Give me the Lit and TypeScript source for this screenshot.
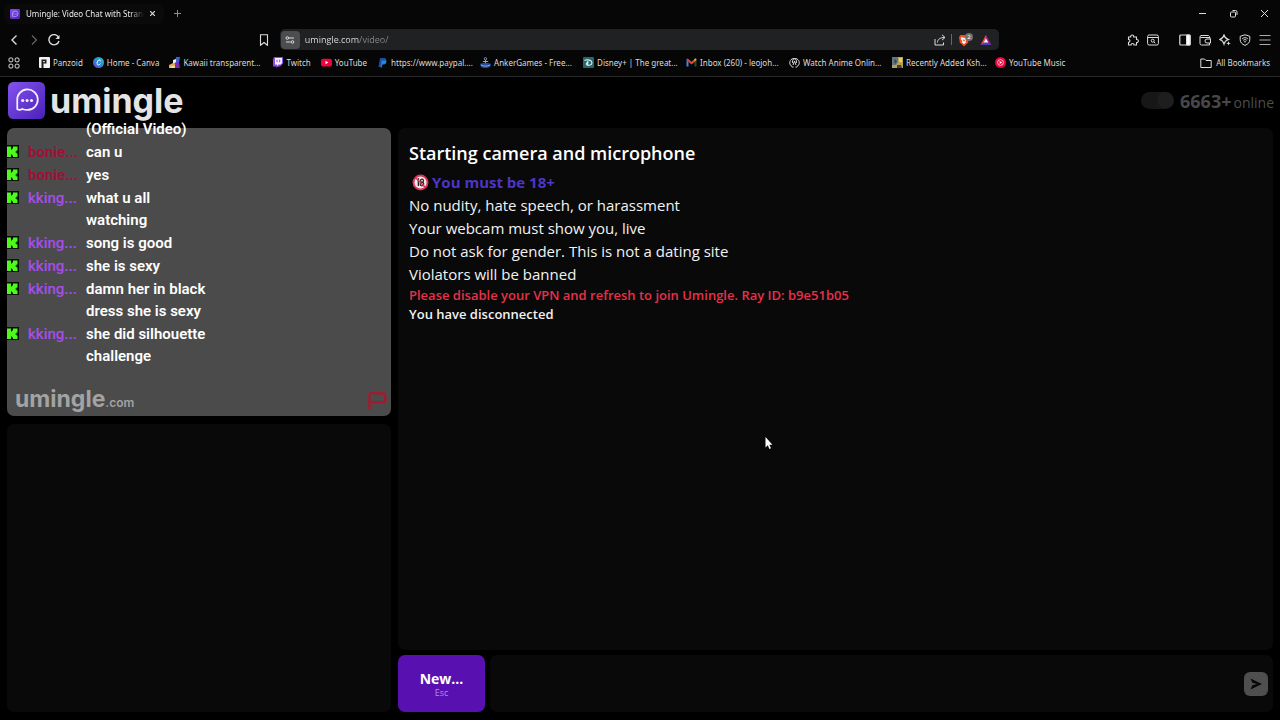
import { LitElement, html, css, svg, nothing } from "lit";
import { customElement, property } from "lit/decorators.js";
import { classMap } from "lit/directives/class-map.js";

const logoMark = svg`
  <defs><linearGradient id="lg" x1="0" y1="0" x2="1" y2="1"><stop offset="0" stop-color="#8354ee"/><stop offset="1" stop-color="#4a1fb8"/></linearGradient></defs>
  <rect width="36" height="36" rx="5" fill="url(#lg)"/>
  <path d="M9 26.500V18a10 10 0 1 1 10 9.200c-2 0-3.500-.3-5-1-1.500.9-3.200 1.100-5 .3z" fill="none" stroke="#f3eefe" stroke-width="1.700" stroke-linejoin="round"/>
  <g fill="#f3eefe"><circle cx="14.300" cy="18" r="1.500"/><circle cx="18.600" cy="18" r="1.500"/><circle cx="22.900" cy="18" r="1.500"/></g>`;

const favicons: Record<string, unknown> = {
  panzoid: svg`<rect width="11" height="11" rx="1" fill="#f2f2f2"/><path d="M2.500 11V2.500h5v4h-3V11z" fill="#1c1c1c"/><path d="M4.200 4h1.600v1.200H4.200z" fill="#f2f2f2"/>`,
  canva: svg`<defs><linearGradient id="cv" x1="0" y1="1" x2="1" y2="0"><stop offset="0" stop-color="#6a35d9"/><stop offset=".5" stop-color="#2d8fd8"/><stop offset="1" stop-color="#25c3cf"/></linearGradient></defs><circle cx="5.500" cy="5.500" r="5.500" fill="url(#cv)"/><path d="M7.500 4.200C7.400 2.900 6.200 2.600 5.300 3.400 3.900 4.600 3.500 8 5.200 8c.9 0 1.700-.6 2.200-1.400" fill="none" stroke="#fff" stroke-width="1"/>`,
  kawaii: svg`<path d="M7 0h4l-1 6-4 1z" fill="#3d5fd0"/><path d="M4 3l3-1v3L4 8z" fill="#eee"/><path d="M0 8l4-2 3 1v4H0z" fill="#e6a56c"/><path d="M6 6l4-1 1 6H6z" fill="#7a2bb3"/><path d="M2 9h4v2H1z" fill="#f3dc7a"/>`,
  twitch: svg`<path d="M2 0h9v6.500L8 9.500H6L4.500 11V9.500H1V2z" fill="#8c46f5"/><path d="M3 1h7v5L8.500 7.500H6.500L5 9V7.500H3z" fill="#f6f0ff"/><path d="M5 2.700v2.600M7.700 2.700v2.600" stroke="#8c46f5" stroke-width="1"/>`,
  youtube: svg`<rect y="1.700" width="11" height="7.800" rx="2" fill="#f4003d"/><path d="M4.500 3.800v3.500L7.300 5.600z" fill="#fff"/>`,
  paypal: svg`<path d="M3 1h4c2 0 2.700 1.200 2.300 2.800C8.900 5.800 7.500 6.500 5.500 6.500H4.700L4 10H1.500z" fill="#1c4ba8"/><path d="M4.700 3.500h4.500c.8 2.700-.7 4-3 4h-.8L4.800 10.500H3.500z" fill="#2b93e0" opacity=".85"/>`,
  anker: svg`<circle cx="5.500" cy="1.800" r="1.200" fill="none" stroke="#7da7e8" stroke-width=".9"/><path d="M5.500 3v4M2.800 4.500h5.400" stroke="#7da7e8" stroke-width="1.100"/><path d="M0 7c3-1.200 8-1.200 11 0l-1 3c-2.500 1.200-6.500 1.200-9 0z" fill="#274f9c"/><path d="M1 8c3 1.500 6 1.500 9 0" fill="none" stroke="#8fb4ee" stroke-width=".9"/>`,
  disney: svg`<rect width="11" height="11" rx="1" fill="#27666d"/><path d="M1.500 3.500c3-1.500 7.500-.3 7.500 2.300 0 2.400-3.500 3-5 2.200-1.500-1-.5-2.400 1.500-2.500M4.700 3.800v4.500" fill="none" stroke="#d9f2f1" stroke-width="1.100"/>`,
  gmail: svg`<path d="M.5 9.500V3l2 1.500v5z" fill="#4284f3"/><path d="M.5 3V2l1.300-.5L5.500 4.700 9 1.700v3L5.500 7.600z" fill="#e34335"/><path d="M8.500 9.500v-5l2-1.700v6.700z" fill="#2fa650" opacity=".5"/><path d="M8.500 4.500V2c1-.9 2-.4 2 .9z" fill="#f9ba06"/>`,
  anime: svg`<path d="M3 9.500C0 8 0 3.500 3 2c3-1.500 5 1 4.500 4M8 9.500c3-1.500 3-6 0-7.500-3-1.500-5 1-4.500 4" fill="none" stroke="#ddd" stroke-width="1"/><path d="M4 8l1.500-4L7 8M3 10h1.500M6.500 10H8" fill="none" stroke="#ddd" stroke-width="1"/>`,
  kshow: svg`<rect width="11" height="11" fill="#b9a24e"/><path d="M0 0h6v5L4 8H0z" fill="#5f7684"/><path d="M2 2l3 2-2 3M5 8h4l1 3H5z" fill="#37424a"/><path d="M7 1h3v4H7z" fill="#e5cf6a"/>`,
  ytmusic: svg`<circle cx="5.500" cy="5.500" r="5.500" fill="#f4003d"/><circle cx="5.500" cy="5.500" r="2.900" fill="none" stroke="#fff" stroke-width=".7"/><path d="M4.700 4v3l2.400-1.500z" fill="#fff"/>`,
};

const bookmarks = [
  { icon: "panzoid", label: "Panzoid" },
  { icon: "canva", label: "Home - Canva" },
  { icon: "kawaii", label: "Kawaii transparent...", clipped: true },
  { icon: "twitch", label: "Twitch" },
  { icon: "youtube", label: "YouTube" },
  { icon: "paypal", label: "https://www.paypal....", clipped: true },
  { icon: "anker", label: "AnkerGames - Free...", clipped: true },
  { icon: "disney", label: "Disney+ | The great...", clipped: true },
  { icon: "gmail", label: "Inbox (260) - leojoh...", clipped: true },
  { icon: "anime", label: "Watch Anime Onlin...", clipped: true },
  { icon: "kshow", label: "Recently Added Ksh...", clipped: true },
  { icon: "ytmusic", label: "YouTube Music" },
];

@customElement("browser-bar")
class BrowserBar extends LitElement {
  static styles = css`
    :host { display: block; background: #060606; border-bottom: 1px solid #2a2a2a; color: #dcdcdc; font-family: "Noto Sans", "Open Sans", sans-serif; font-size: 8px; }
    button, a { border: 0; background: none; padding: 0; color: inherit; font: inherit; text-decoration: none; display: flex; align-items: center; }
    svg { display: block; flex: none; fill: none; stroke: currentColor; }
    .fav svg, svg.fav { stroke: none; }
    .strip { display: flex; align-items: center; height: 27px; padding: 0 10px 0 4px; }
    .tab { display: flex; align-items: center; width: 160px; height: 20px; padding: 0 9px 0 6px; box-sizing: border-box; background: #0a0a0a; border-radius: 5px; }
    .title { flex: 1; margin: 0 6px; white-space: nowrap; overflow: hidden; color: #eaeaea; -webkit-mask-image: linear-gradient(to right, #000 88%, transparent); mask-image: linear-gradient(to right, #000 88%, transparent); }
    .plus { margin-left: 8px; color: #8e8e8e; }
    .window { display: flex; margin-left: auto; gap: 20px; }
    .tools { display: flex; align-items: center; height: 25px; padding: 0 9px 0 8px; }
    .nav { display: flex; gap: 8px; flex: 1; }
    .dim { color: #666; }
    .mark { margin-right: 10px; }
    .address { display: flex; align-items: center; flex: 0 0 56.2vw; height: 21px; background: #202123; border-radius: 5px; padding-right: 7px; box-sizing: border-box; }
    .site { width: 19px; height: 18px; margin: 0 0 0 1px; justify-content: center; background: #4b4d4f; border-radius: 4px; }
    .url { flex: 1; min-width: 0; margin: 0 0 0 5px; padding: 0; border: 0; outline: 0; font: 9px "Open Sans", sans-serif; color: transparent; background: linear-gradient(to right, #e6e6e6 54px, #8b8b8b 54px); -webkit-background-clip: text; background-clip: text; }
    .bar { width: 1px; height: 11px; margin: 0 6px 0 5px; background: #66686a; }
    .brave { margin-right: 6px; }
    .right { display: flex; align-items: center; justify-content: flex-end; gap: 8px; flex: 1; padding-left: 22px; }
    .gap { margin-right: 12px; }
    .marks { display: flex; align-items: center; height: 24px; box-sizing: border-box; padding: 0 10px 3px 8px; white-space: nowrap; }
    .list { display: flex; gap: 10px; margin-left: 19px; }
    .list a { gap: 3px; }
    .list .clipped { width: 93px; }
    .all { margin-left: auto; gap: 4px; }
  `;

  render() {
    return html`
      <div class="strip">
        <div class="tab">
          <svg class="fav" width="10" height="10" viewBox="0 0 36 36">${logoMark}</svg>
          <span class="title">Umingle: Video Chat with Strangers</span>
          <button aria-label="Close tab"><svg width="5" height="5" viewBox="0 0 5 5"><path d="M0 0l5 5M5 0L0 5" stroke-width="1.200"/></svg></button>
        </div>
        <button class="plus" aria-label="New tab"><svg width="11" height="11" viewBox="0 0 11 11"><path d="M5.500 2v7M2 5.500h7"/></svg></button>
        <div class="window">
          <button aria-label="Minimize"><svg width="11" height="11" viewBox="0 0 11 11"><path d="M2 5.500h7"/></svg></button>
          <button aria-label="Restore"><svg width="11" height="11" viewBox="0 0 11 11"><rect x="2.500" y="4" width="5" height="5" rx="1"/><path d="M4.500 2.500h3a1.500 1.500 0 0 1 1.500 1.500v3"/></svg></button>
          <button aria-label="Close window"><svg width="11" height="11" viewBox="0 0 11 11"><path d="M2 2l7 7M9 2L2 9"/></svg></button>
        </div>
      </div>
      <div class="tools">
        <div class="nav">
          <button aria-label="Back"><svg width="12" height="12" viewBox="0 0 12 12"><path d="M8.500 1.500L4 6l4.500 4.500" stroke-width="1.400"/></svg></button>
          <button class="dim" aria-label="Forward"><svg width="12" height="12" viewBox="0 0 12 12"><path d="M4 1.500L8.500 6 4 10.500" stroke-width="1.200"/></svg></button>
          <button aria-label="Reload"><svg width="12" height="12" viewBox="0 0 12 12"><path d="M10.500 3.200A5.100 5.100 0 1 0 11 7" stroke-width="1.400"/><path d="M11.500 1v4h-4z" fill="currentColor" stroke="none"/></svg></button>
        </div>
        <button class="mark" aria-label="Bookmark this page"><svg width="12" height="12" viewBox="0 0 12 12"><path d="M2.500.8h7v10.500L6 8.500l-3.500 2.800z" stroke-width="1.100"/></svg></button>
        <div class="address">
          <button class="site" aria-label="Site information"><svg width="10" height="10" viewBox="0 0 10 10"><circle cx="2.300" cy="3" r="1.300"/><path d="M4 3h5M1 7h4.500"/><circle cx="7.500" cy="7" r="1.300"/></svg></button>
          <input class="url" type="text" aria-label="Address" value="umingle.com/video/" />
          <button aria-label="Share"><svg width="12" height="12" viewBox="0 0 12 12" stroke="#999"><path d="M1 5v6h8.500V8.500M3.500 8.500C3.500 5.500 6 3.500 10.500 3.500M8 .8l3 2.700-3 2.700"/></svg></button>
          <span class="bar"></span>
          <button class="brave" aria-label="Brave Shields"><svg class="fav" width="16" height="14" viewBox="0 0 16 14"><path d="M2.500 2h7l1.500 2-.8 5.500-4.200 4-4.200-4L1 4z" fill="#ee5125"/><path d="M3.500 4L6 5l2.500-1 .7 2L7.500 8l.5 1.500-2 1.500-2-1.500L4.500 8 2.800 6z" fill="#fff"/><path d="M4.500 6L6 7l1.500-1L6 9z" fill="#ee5125"/><circle cx="11" cy="4" r="4" fill="#6d7075"/><text x="11" y="6" font-size="6" text-anchor="middle" fill="#fff">2</text></svg></button>
          <button aria-label="Brave Rewards"><svg class="fav" width="12" height="12" viewBox="0 0 12 12"><path d="M6 .8L.5 11l5.500-3z" fill="#f24a3c"/><path d="M6 .8L11.500 11 6 8z" fill="#9b2085"/><path d="M.5 11h11L6 7.500z" fill="#4a3fb5"/><path d="M6 4.500l2.300 4H3.700z" fill="#fff"/></svg></button>
        </div>
        <div class="right">
          <button aria-label="Extensions"><svg width="12" height="12" viewBox="0 0 12 12"><path d="M1.500 3h2.200C3.300.3 7 .3 6.700 3H9.500v2.500c2.500-.3 2.500 3.300 0 3V11H7C7 9 4 9 4 11H1.500V8.300C3.500 8 3.500 5.500 1.500 5.500z" stroke-width="1.100"/></svg></button>
          <button class="gap" aria-label="Search tabs"><svg width="12" height="12" viewBox="0 0 12 12"><rect x=".6" y="1" width="10.800" height="10" rx="1.500"/><path d="M1 3.500h10M6.800 7.800L8.300 9.300"/><circle cx="5.700" cy="6.700" r="1.500"/></svg></button>
          <button aria-label="Side panel"><svg width="12" height="12" viewBox="0 0 12 12"><rect x=".8" y="1" width="10.400" height="10" rx="1" stroke-width="1.200"/><path d="M7.500 1H11v10H7.500z" fill="#fff"/></svg></button>
          <button aria-label="Wallet"><svg width="12" height="12" viewBox="0 0 12 12"><path d="M10.500 4V2.500L9.500 1.500H2A1.500 1.500 0 0 0 1 3v6.500a1.500 1.500 0 0 0 1.500 1.500h8v-2M1.500 3.500h9.500V5M11.500 5H8a2 2 0 0 0 0 4h3.500z"/></svg></button>
          <button aria-label="Leo AI"><svg width="12" height="12" viewBox="0 0 12 12"><path d="M5 1c.7 2.700 1.500 3.600 4.500 4.500C6.500 6.400 5.700 7.300 5 10 4.300 7.300 3.500 6.400.7 5.500 3.500 4.600 4.300 3.700 5 1z" stroke-width="1.100"/><path d="M9.500 7l.6 1.700 1.700.6-1.700.6-.6 1.700-.6-1.700-1.700-.6 1.700-.6z" fill="currentColor" stroke="none"/></svg></button>
          <button aria-label="VPN"><svg width="12" height="12" viewBox="0 0 12 12"><path d="M6 .8l4.800 1.500v3.500c0 2.500-1.800 4.400-4.800 5.600-3-1.200-4.800-3.100-4.800-5.600V2.300z"/><path d="M3.200 4.800c1.700-1.500 3.900-1.500 5.600 0M4.300 6.300c1-.9 2.400-.9 3.400 0" /><circle cx="6" cy="7.800" r=".8" fill="currentColor" stroke="none"/></svg></button>
          <button aria-label="Menu"><svg width="12" height="12" viewBox="0 0 12 12"><path d="M.5 1.500h11M.5 6h11M.5 10.500h11" stroke="#aaa"/></svg></button>
        </div>
      </div>
      <nav class="marks">
        <button aria-label="Apps"><svg width="12" height="12" viewBox="0 0 12 12"><rect x="1" y="1" width="3.800" height="3.800" rx="1"/><rect x="7.200" y="1" width="3.800" height="3.800" rx="1"/><rect x="1" y="7.200" width="3.800" height="3.800" rx="1"/><rect x="7.200" y="7.200" width="3.800" height="3.800" rx="1"/></svg></button>
        <div class="list">
          ${bookmarks.map(b => html`<a href="#" class=${classMap({ clipped: !!b.clipped })}><svg class="fav" width="11" height="11" viewBox="0 0 11 11">${favicons[b.icon]}</svg>${b.label}</a>`)}
        </div>
        <button class="all"><svg width="12" height="12" viewBox="0 0 12 12"><path d="M.8 2h3.700L6 3.500h5.200V10.500H.8z"/></svg>All Bookmarks</button>
      </nav>`;
  }
}

const messages = [
  { text: "(Official Video)" },
  { user: "bonie...", tone: "red", text: "can u" },
  { user: "bonie...", tone: "red", text: "yes" },
  { user: "kking...", tone: "purple", text: "what u all watching" },
  { user: "kking...", tone: "purple", text: "song is good" },
  { user: "kking...", tone: "purple", text: "she is sexy" },
  { user: "kking...", tone: "purple", text: "damn her in black dress she is sexy" },
  { user: "kking...", tone: "purple", text: "she did silhouette challenge" },
];

@customElement("stream-chat")
class StreamChat extends LitElement {
  static styles = css`
    :host { display: block; font: 15px/22px Roboto, sans-serif; }
    ul { list-style: none; margin: 0; padding: 0; display: flex; flex-direction: column; gap: 1px; }
    li { display: grid; grid-template-columns: 21px 58px 128px; }
    svg { display: block; margin-top: 4px; }
    .user { font-weight: 500; }
    .red { color: #a30e38; font-weight: 600; }
    .purple { color: #a64df0; }
    .text { grid-column: 3; color: #fff; font-weight: 600; }
  `;
  render() {
    return html`<ul>${messages.map(m => html`<li>
      ${m.user ? html`<svg width="12" height="13" viewBox="0 0 12 13"><rect width="12" height="13" fill="#061006"/><path d="M0 1.500h4v3h1v-1h1v-2h4.500v4h-1v1h-1v1h1v1h1v3.500H6v-1.500H5v-1H4v2.500H0z" fill="#4dfa1c"/></svg><span class="user ${m.tone}">${m.user}</span>` : nothing}
      <span class="text">${m.text}</span></li>`)}</ul>`;
  }
}

@customElement("video-tile")
class VideoTile extends LitElement {
  @property({ type: Boolean, reflect: true }) live = false;
  static styles = css`
    :host { display: flex; flex-direction: column; justify-content: flex-end; position: relative; background: #090909; border-radius: 7px; }
    :host([live]) { background: #4b4b4b; }
    stream-chat { position: absolute; left: 0; top: -10px; }
    .foot { display: flex; align-items: center; justify-content: space-between; padding: 0 4px 1px 8px; }
    .mark { color: #a3a3a3; font: 700 23px/24px Inter, sans-serif; }
    .mark small { font-size: 12px; font-weight: 600; }
    button { border: 0; background: none; padding: 0; }
    svg { display: block; }
  `;
  render() {
    return this.live ? html`
      <stream-chat></stream-chat>
      <div class="foot">
        <span class="mark">umingle<small>.com</small></span>
        <button aria-label="Report"><svg width="20" height="20" viewBox="0 0 20 20"><path d="M2.500 18.500V4c0-1.500 1-2 2.300-2.200C8 1.300 9 2.500 12 2.500h4c1.500 0 2.200.7 2.200 2V9c0 1.500-.7 2.200-2.200 2.200H2.500" fill="none" stroke="#a8182c" stroke-width="2.300" stroke-linejoin="round"/></svg></button>
      </div>` : nothing;
  }
}

@customElement("app-root")
class AppRoot extends LitElement {
  static styles = css`
    :host { display: flex; flex-direction: column; height: 100vh; overflow: hidden; background: #000; color: #f2f2f2; font-family: "Open Sans", "Noto Sans", sans-serif; }
    browser-bar { flex: none; }
    header { display: flex; align-items: center; justify-content: space-between; height: 51px; box-sizing: border-box; padding: 0 6px 4px 8px; }
    h1 { display: flex; align-items: center; gap: 5px; margin: 0; font: 700 34px/40px Inter, sans-serif; color: #e4e4e4; }
    svg { display: block; flex: none; }
    .online { display: flex; align-items: baseline; color: #4d4d4d; font-size: 14px; }
    .online b { font-size: 18px; margin: 0 2px 0 6px; color: #484848; }
    .toggle { appearance: none; align-self: center; width: 33px; height: 17px; margin: 0; border-radius: 9px; background: radial-gradient(circle at 25px 8px, #1e1e1e 8px, #171717 9px); }
    main { flex: 1; min-height: 0; display: flex; gap: 7px; padding: 0 7px 8px; }
    .videos { flex: 0 0 30vw; display: flex; flex-direction: column; gap: 8px; }
    .videos video-tile { flex: 1; }
    .talk { flex: 1; min-width: 0; display: flex; flex-direction: column; gap: 5px; }
    .log { flex: 1; background: #090909; border-radius: 7px; padding: 12px 11px; }
    h2 { margin: 0 0 5px; font-size: 18px; line-height: 26px; font-weight: 650; color: #fff; }
    p { margin: 0; font-size: 15px; line-height: 23px; }
    .adult { display: flex; align-items: center; gap: 3px; padding-left: 3px; color: #4c35c8; font-weight: 700; }
    .small { font-size: 13px; line-height: 19px; font-weight: 550; }
    .warn { color: #e8304a; font-weight: 650; }
    .compose { display: flex; gap: 5px; height: 57px; }
    .new { display: flex; flex-direction: column; align-items: center; justify-content: center; width: 87px; border: 0; border-radius: 7px; background: #5910b0; color: #fff; font: 700 14px/17px "Open Sans", sans-serif; padding: 2px 0 0; }
    .new small { font-size: 9px; line-height: 12px; font-weight: 500; color: #b48be6; }
    form { flex: 1; display: flex; align-items: center; background: #090909; border-radius: 7px; padding-right: 5px; }
    textarea { flex: 1; height: 40px; border: 0; outline: 0; resize: none; background: none; color: #fff; font: inherit; }
    .send { width: 24px; height: 24px; padding: 0; border: 0; border-radius: 6px; background: #4f4f4f; display: grid; place-items: center; }
    .pointer { position: absolute; left: 59.7%; top: 436px; }
  `;
  render() {
    return html`
      <browser-bar></browser-bar>
      <header>
        <h1><svg width="37" height="37" viewBox="0 0 36 36">${logoMark}</svg>umingle</h1>
        <label class="online"><input class="toggle" type="checkbox" checked /><b>6663+</b>online</label>
      </header>
      <main>
        <section class="videos"><video-tile live></video-tile><video-tile></video-tile></section>
        <section class="talk">
          <div class="log">
            <h2>Starting camera and microphone</h2>
            <p class="adult"><svg width="17" height="17" viewBox="0 0 17 17"><circle cx="8.500" cy="8.500" r="7" fill="#f6e9ec" stroke="#d9385a" stroke-width="1.900"/><path d="M5 6l1.400-1v7" fill="none" stroke="#222" stroke-width="1.400"/><circle cx="10" cy="6.700" r="1.500" fill="none" stroke="#222" stroke-width="1.200"/><circle cx="10" cy="10.100" r="1.800" fill="none" stroke="#222" stroke-width="1.200"/><path d="M3.500 3.500l10 10" stroke="#d9385a" stroke-width="1.500"/></svg>You must be 18+</p>
            <p>No nudity, hate speech, or harassment</p>
            <p>Your webcam must show you, live</p>
            <p>Do not ask for gender. This is not a dating site</p>
            <p>Violators will be banned</p>
            <p class="small warn">Please disable your VPN and refresh to join Umingle. Ray ID: b9e51b05</p>
            <p class="small">You have disconnected</p>
          </div>
          <div class="compose">
            <button class="new"><span>New...</span><small>Esc</small></button>
            <form>
              <textarea aria-label="Message"></textarea>
              <button class="send" type="button" aria-label="Send"><svg width="14" height="14" viewBox="0 0 14 14"><path d="M1.500 1.500L13 7 1.500 12.500l1.800-4.300L8 7 3.300 5.800z" fill="#090909"/></svg></button>
            </form>
          </div>
        </section>
      </main>
      <svg class="pointer" width="9" height="14" viewBox="0 0 9 14"><path d="M1.500 1v10.500l2.300-2.200 1.600 3.700 1.600-.7-1.600-3.600h3z" fill="#fff"/></svg>`;
  }
}
